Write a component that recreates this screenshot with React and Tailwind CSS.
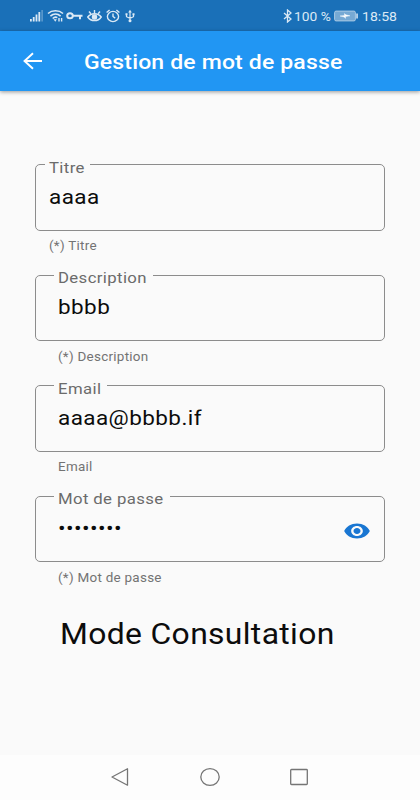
const fields = [
  {
    label: "Titre",
    value: "aaaa",
    helper: "(*) Titre",
    inset: "pl-[9px]",
    gap: "w-[45px]",
    text: "pl-[13px]",
    help: "pl-[14px]",
  },
  {
    label: "Description",
    value: "bbbb",
    helper: "(*) Description",
    inset: "pl-[18px]",
    gap: "w-[99px]",
    text: "pl-[22px]",
    help: "pl-[23px]",
  },
  {
    label: "Email",
    value: "aaaa@bbbb.if",
    helper: "Email",
    inset: "pl-[18px]",
    gap: "w-[53px]",
    text: "pl-[22px]",
    help: "pl-[23px]",
  },
  {
    label: "Mot de passe",
    value: "••••••••",
    helper: "(*) Mot de passe",
    inset: "pl-[18px]",
    gap: "w-[116px]",
    text: "pl-[22px]",
    help: "pl-[23px]",
    secret: true,
  },
];

const StatusBar = () => (
  <div className="flex h-[31px] items-center justify-between bg-[#1a70b8] pr-[23px] pl-[29px] text-[#dbe9f5]">
    <div className="flex items-center pt-px">
      <svg width="16" height="14" viewBox="0 0 16 14" fill="currentColor">
        <path d="M1 10h1.800v2.500H1zM3.800 8h1.800v4.500H3.800zM6.600 5.500h1.800v7H6.600zM9.400 3h1.800v9.500H9.400z" />
        <path d="M12.400 1h1.400v11.500h-1.400z" opacity="0.4" />
      </svg>
      <svg
        className="ml-[2px]"
        width="17"
        height="14"
        viewBox="0 0 17 14"
        fill="none"
        stroke="currentColor"
        strokeWidth="1.6"
      >
        <path d="M1 4.500C5 .9 12 .9 16 4.500M3.400 7.100c3-2.700 7.200-2.700 10.200 0M5.700 9.500c1.600-1.400 3.500-1.500 4.600-.8" />
        <path d="M6.500 10.200h3.300l-1.500 2.600z" fill="currentColor" stroke="none" />
        <path d="M12 9v3.500M14.600 9v3.500" strokeWidth="1.4" />
      </svg>
      <svg
        className="ml-[2px]"
        width="17"
        height="14"
        viewBox="0 0 17 14"
        fill="none"
        stroke="currentColor"
        strokeWidth="2"
      >
        <ellipse cx="4" cy="6.800" rx="2.800" ry="2.500" />
        <path d="M6.500 6.800h10M14 6.800v3.400" />
      </svg>
      <svg
        className="ml-[4px]"
        width="15"
        height="14"
        viewBox="0 0 15 14"
        fill="none"
        stroke="currentColor"
        strokeWidth="1.5"
      >
        <path d="M.8 8c3.200-4.400 10.200-4.400 13.400 0-3.200 4.800-10.200 4.800-13.400 0z" />
        <circle cx="7.500" cy="8" r="2" fill="currentColor" />
        <path d="M7.500 1v3M2 2.500l1.900 2.300M13 2.500l-1.900 2.300" strokeWidth="1.4" />
      </svg>
      <svg
        className="ml-[4px]"
        width="14"
        height="14"
        viewBox="0 0 14 14"
        fill="none"
        stroke="currentColor"
        strokeWidth="1.4"
      >
        <ellipse cx="7" cy="7.500" rx="5.600" ry="5.100" />
        <path d="M7 4.500v3l2.200 1.600M.6 3.600l3-2.700M13.400 3.600l-3-2.700" />
      </svg>
      <svg
        className="ml-[5px]"
        width="10"
        height="14"
        viewBox="0 0 10 14"
        fill="none"
        stroke="currentColor"
        strokeWidth="1.2"
      >
        <path d="M5 3v8M1.500 5.500v2.200L5 9.400l3.500-1.700V5" />
        <path d="M3.200 3.600 5 .7l1.800 2.900z" fill="currentColor" stroke="none" />
        <circle cx="5" cy="11.800" r="1.500" fill="currentColor" stroke="none" />
        <path d="M.5 4.200h2v2h-2zM7.500 4.200h2v2h-2z" fill="currentColor" stroke="none" />
      </svg>
    </div>

    <div className="flex items-center pt-px text-[13px] leading-none">
      <svg
        width="10"
        height="14"
        viewBox="0 0 10 14"
        fill="none"
        stroke="currentColor"
        strokeWidth="1.3"
      >
        <path d="M1 4l7 6-3.500 3V1L8 4l-7 6" />
      </svg>
      <span className="ml-px w-[39px] origin-left scale-x-[1.06] whitespace-nowrap">
        100 %
      </span>
      <svg className="ml-px" width="24" height="12" viewBox="0 0 24 12">
        <rect x=".6" y="1.100" width="20.800" height="9.800" rx="1.500" fill="#76a9d4" stroke="#a9c9e4" />
        <path d="M22.300 3.500h1.500v5h-1.500z" fill="#dbe9f5" />
        <path d="M6 6l4.500-.6V3.600l1.300 1.200 4.200 1-4.500.8v1.800L10.200 7z" fill="#fff" stroke="#fff" strokeWidth=".4" />
      </svg>
      <span className="ml-[4px] w-[35px] origin-left scale-x-[1.08]">18:58</span>
    </div>
  </div>
);

const Field = ({ label, value, helper, inset, gap, text, help, secret }) => (
  <div className="h-[110.5px]">
    <fieldset
      className={`h-[74px] rounded-[5px] border border-[#8c8c8c] ${inset}`}
    >
      <legend className={`h-[16px] pl-[4px] text-[15.5px] leading-[16px] text-[#6b6b6b] ${gap}`}>
        <span className="block origin-left translate-y-[3px] scale-x-[1.08] tracking-[0.35px] whitespace-nowrap">
          {label}
        </span>
      </legend>
    </fieldset>
    <div className={`-mt-[58px] flex h-[58px] items-start justify-between pr-[14px] ${text}`}>
      <span className="mt-[12px] ml-px origin-left scale-x-[1.07] tracking-[0.4px] text-[21px] leading-[24px] whitespace-nowrap text-[#0c0c0c]">
        {value}
      </span>
      {secret && (
        <svg
          className="mt-[15px] h-[24px] w-[28px] text-[#1976d2]"
          viewBox="0 0 24 24"
          preserveAspectRatio="none"
          fill="currentColor"
        >
          <path d="M12 4.500C7 4.500 2.730 7.610 1 12c1.730 4.390 6 7.500 11 7.500s9.270-3.110 11-7.500c-1.730-4.390-6-7.500-11-7.500zM12 17c-2.760 0-5-2.240-5-5s2.240-5 5-5 5 2.240 5 5-2.240 5-5 5zm0-8c-1.660 0-3 1.340-3 3s1.340 3 3 3 3-1.340 3-3-1.340-3-3-3z" />
        </svg>
      )}
    </div>
    <p className={`mt-[7.500px] text-[12.7px] leading-[16px] text-[#737373] ${help}`}>
      <span className="inline-block origin-left scale-x-[1.06] tracking-[0.25px] whitespace-nowrap">
        {helper}
      </span>
    </p>
  </div>
);

const App = () => {
  return (
    <div className="flex h-[800px] w-[420px] flex-col overflow-hidden bg-[#fafafa] font-[Roboto,sans-serif]">
      <StatusBar />
      <header className="flex h-[60px] shrink-0 items-center bg-[#2196f3] pl-[22px] text-white shadow-[0_1px_4px_rgba(0,0,0,0.4)]">
        <svg
          width="21"
          height="18"
          viewBox="0 0 21 18"
          fill="none"
          stroke="currentColor"
          strokeWidth="1.9"
        >
          <path d="M20 9H2.500M11 1.200 2.500 9l8.500 7.800" />
        </svg>
        <h1 className="mt-[4px] ml-[41px] origin-left scale-x-[1.095] tracking-[0.15px] text-[21px] font-medium whitespace-nowrap">
          Gestion de mot de passe
        </h1>
      </header>

      <main className="flex-1 px-[35px] pt-[65.900px]">
        {fields.map((field) => (
          <Field key={field.label} {...field} />
        ))}
        <p className="mt-[18.100px] ml-[24.500px] origin-left scale-x-[1.100] tracking-[0.3px] text-[29px] leading-[34px] whitespace-nowrap text-[#0c0c0c]">
          Mode Consultation
        </p>
      </main>

      <nav className="flex h-[45px] items-center justify-between bg-[#fdfdfd] pr-[111px] pb-px pl-[110px] text-[#757575]">
        <svg width="20" height="20" viewBox="0 0 20 20" fill="none" stroke="currentColor" strokeWidth="1.3" strokeLinejoin="round">
          <path d="M2 10 17.500 1.800v16.400z" />
        </svg>
        <svg width="20" height="20" viewBox="0 0 20 20" fill="none" stroke="currentColor" strokeWidth="1.3">
          <ellipse cx="10" cy="10" rx="9.200" ry="8.400" />
        </svg>
        <svg width="20" height="20" viewBox="0 0 20 20" fill="none" stroke="currentColor" strokeWidth="1.3">
          <rect x="1.700" y="2.500" width="16.600" height="15" rx=".8" />
        </svg>
      </nav>
    </div>
  );
};

export default App;
